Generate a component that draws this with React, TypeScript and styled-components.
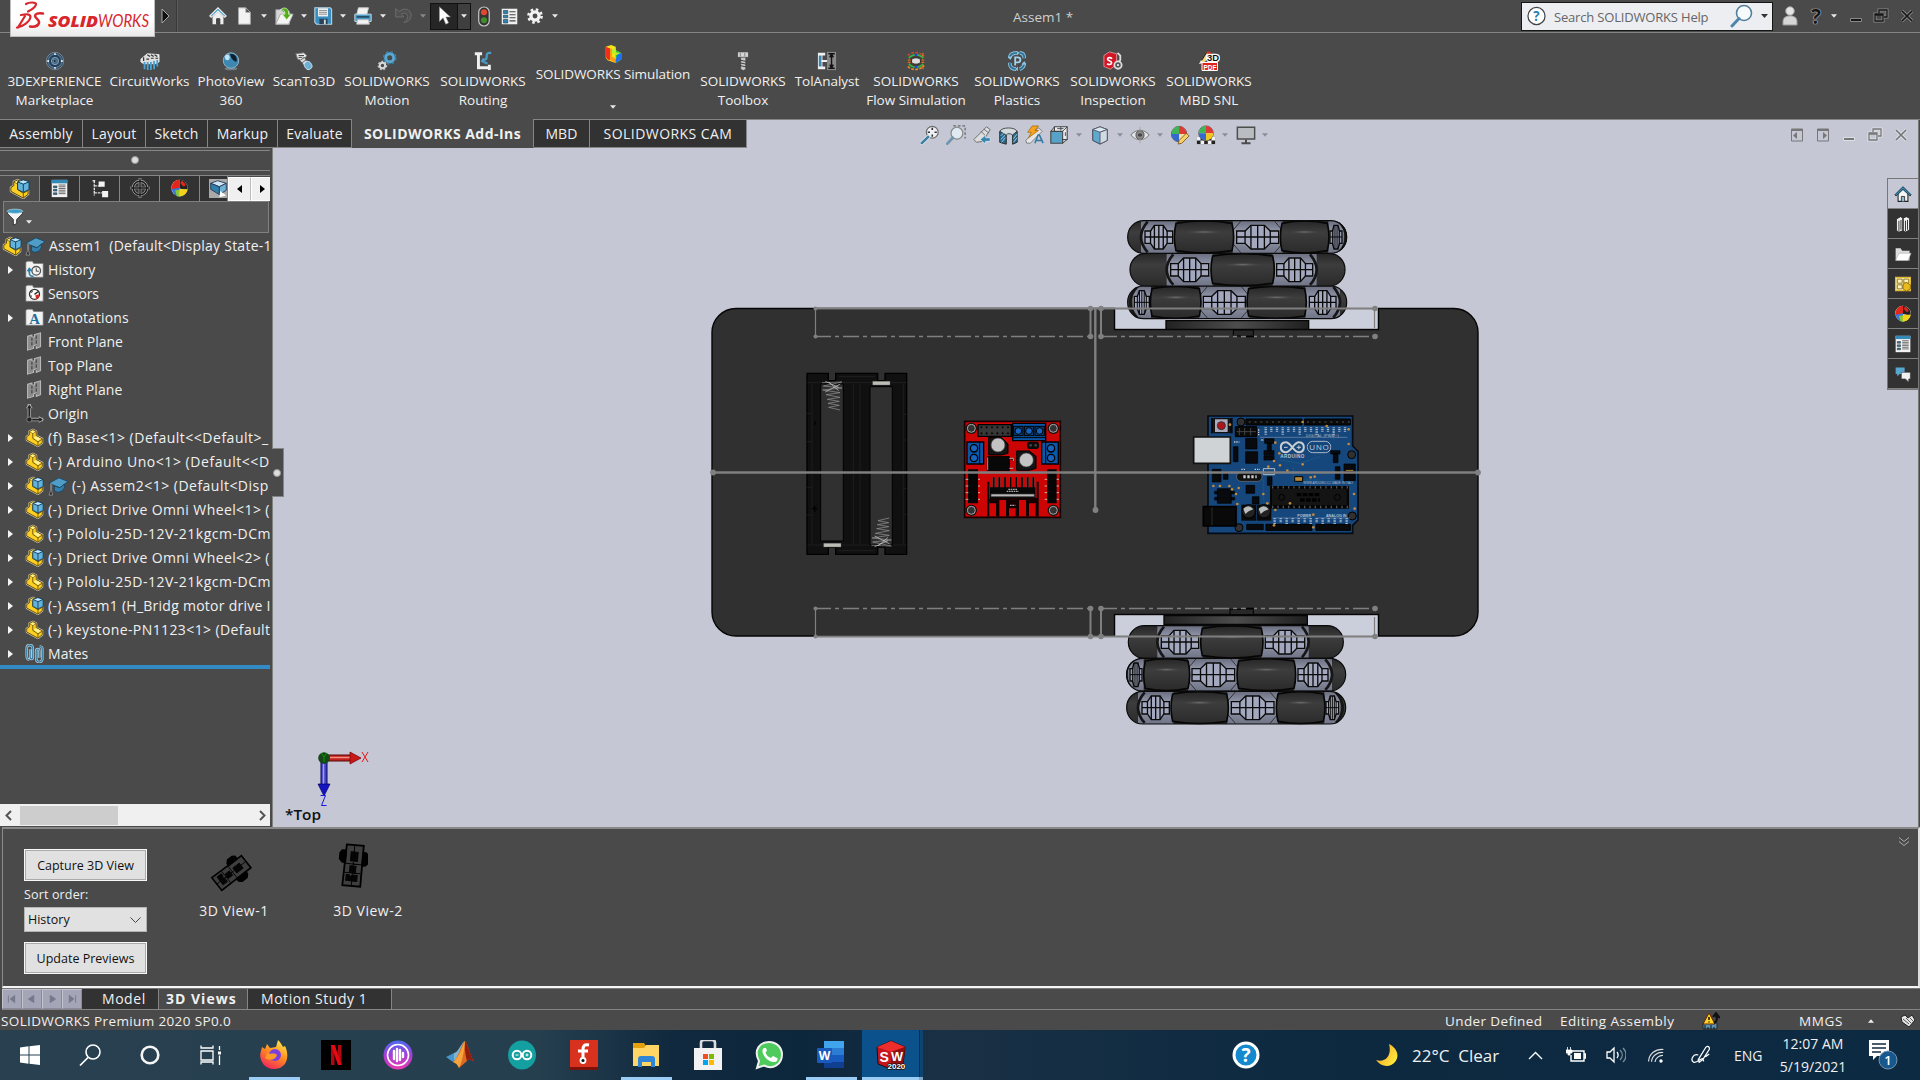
import React from 'react';
import styled, { createGlobalStyle, css } from 'styled-components';

const C = {
  dark: '#4a4a4a',
  tab: '#323232',
  line: '#858585',
  view: '#c5c8d4',
  text: '#f0f0f0',
};

const Global = createGlobalStyle`
  *{box-sizing:border-box}
  body{margin:0;background:${C.dark};overflow:hidden;font-family:"Open Sans","Noto Sans",sans-serif;font-size:14px;color:${C.text}}
  svg{display:block;flex:none}
`;

const Page = styled.div`width:1920px;height:1080px;display:flex;flex-direction:column;overflow:hidden;background:${C.dark};`;

/* ---------- shared ---------- */
const Slot = styled.div<{ w: number }>`width:${p => p.w}px;flex:none;display:flex;align-items:center;justify-content:center;`;
const Gap = styled.div<{ w: number }>`width:${p => p.w}px;flex:none;`;
const Grow = styled.div`flex:1;min-width:0;`;
const Caret = ({ c = '#e8e8e8', s = 7 }: { c?: string; s?: number }) => (
  <svg width={s} height={4} viewBox="0 0 7 4"><path d="M0 0h7L3.500 4z" fill={c} /></svg>
);

/* ---------- icons (22 unit grid) ---------- */
const part = <><path d="M2 10 5 8v-4l4-2 4 2v5l7 3.500v4.500l-5 4-13-7z" fill="#ffd43a" stroke="#c9c3ae" strokeWidth="2.400" strokeLinejoin="round" /><path d="M2 10 5 8v-4l4-2 4 2v5l7 3.500v4.500l-5 4-13-7z" fill="#fcd023" stroke="#5a4200" strokeWidth="1" strokeLinejoin="round" /><path d="M5 4l4 2.200 4-2.200M9 6v6l6 4 5-3M15 16v5" stroke="#6b5000" fill="none" strokeWidth="1" /><path d="M6 4.200 9 3l3 1.200L9 6zM10 11l3-1.500 5.500 3-3.500 2.500z" fill="#fff09a" /></>;
const icons: Record<string, React.ReactNode> = {
  home: <><path d="M2 11 11 2l9 9-1.500 1.500L11 5.500l-7.500 7z" fill="#3b9ccb" stroke="#eee" strokeWidth="1.200" /><path d="M5 12l6-6 6 6v8h-4v-6H9.500v6H5z" fill="#eee" /><path d="M9.500 20v-6H13v6" fill="none" stroke="#333" /></>,
  homeDark: <><path d="M5 10v10h12V10l-6-6z" fill="#f6f6f6" stroke="#222" strokeWidth="1.300" /><path d="M1 12 11 2l10 10-1.500 1.500L11 5.500l-8.500 8z" fill="#2f89b8" stroke="#1b3442" strokeWidth="1.100" /><path d="M9 20v-6h4v6" fill="#8fbdd4" stroke="#222" /></>,
  doc: <path d="M5 2h8l5 5v13H5zM13 2v5h5" fill="#f2f2f2" stroke="#aaa" />,
  open: <><path d="M2 4h6l2 2h7v14H2z" fill="#d7d7d7" stroke="#999" /><path d="M2 20 7 9h14l-5 11z" fill="#f4f4f4" stroke="#aaa" /><path d="M7 4c5-4 10-1 9 5h3l-5 6-5-6h3c0-3-1-5-5-5z" fill="#54ad16" stroke="#e8ffe0" strokeWidth=".700" /></>,
  save: <><path d="M2 2h17l1.500 1.500V20H4l-2-2z" fill="#3a8fc0" stroke="#b9d4e2" strokeWidth="1.200" /><path d="M5.500 2.500h11v9h-11z" fill="#f0f0f0" /><path d="M6.500 5h9M6.500 7h9M6.500 9h9" stroke="#888" /><path d="M7 14h9v6H7z" fill="#29445a" /><path d="M12 15h2v5h-2z" fill="#ddd" /></>,
  print: <><path d="M6 2h11l-2 8H4z" fill="#f3f3f3" stroke="#ccc" /><path d="M2 9h18v8H2z" fill="#4c9cc6" stroke="#c9dce6" /><path d="M4 11h14v2H4z" fill="#26506a" /><path d="M5 15h12l1 5H4z" fill="#f3f3f3" stroke="#bbb" /></>,
  undo: <path d="M3 3v9h9L9 9c4-3 8 0 7 4-.5 2-2 4-4 5 5 0 8-4 8-8 0-6-8-9-13-4z" fill="#505050" stroke="#707070" />,
  cursor: <path d="M6 1v16l4-4 3 7 3-1.500-3-6.500h5z" fill="#fff" stroke="#999" strokeWidth=".600" />,
  light: <><rect x="6" y="1" width="11" height="20" rx="5.500" fill="#333" stroke="#ccc" strokeWidth="1.200" /><circle cx="11.500" cy="6.500" r="3.200" fill="#e4472f" /><circle cx="11.500" cy="15" r="3.200" fill="#3f8c2b" /></>,
  list: <><path d="M2 2h18v18H2z" fill="#f0f0f0" /><path d="M4 4h5v3.500H4zM4 9.500h5v3H4zM4 14.500h5v4H4z" fill="#3182ad" stroke="#153b52" strokeWidth=".700" /><path d="M11 5.500h7M11 9h7M11 12.500h7M11 16h7" stroke="#444" strokeWidth="1.300" /></>,
  gear: <><circle cx="11" cy="11" r="5" fill="none" stroke="#f2f2f2" strokeWidth="4" /><circle cx="11" cy="11" r="8" fill="none" stroke="#f2f2f2" strokeWidth="3.200" strokeDasharray="3.100 3.180" /></>,
  user: <><circle cx="11" cy="6" r="4.300" fill="#e5e5e5" stroke="#999" /><path d="M4 20v-4c0-7 14-7 14 0v4z" fill="#d6d6d6" stroke="#999" /></>,
  market: <><circle cx="11" cy="11" r="9.500" fill="#2a4258" stroke="#7e8c98" /><circle cx="11" cy="11" r="7.500" fill="#233e56" stroke="#4e7495" strokeWidth="1.500" /><circle cx="11" cy="11" r="4" fill="#3e6789" stroke="#8ba2b5" /><path d="M9.500 8.800 13 11l-3.500 2.200z" fill="#0f2232" stroke="#9fb4c4" strokeWidth=".500" /><path d="M11 2.500v2M11 17.500v2M2.500 11h2M17.500 11h2" stroke="#d8e0e8" strokeWidth="2" /></>,
  circuit: <><path d="M1 9 8 3l13 1v8l-4 2H4l-3-2z" fill="#ddd" stroke="#fff" strokeWidth=".800" /><path d="M5 12v8M8.500 12v9M12 12v9M15.500 11v9M19 10v7" stroke="#4ba1cf" strokeWidth="2" /><path d="M4 7v4M8 4l3 2M12 4l3 2M16 4l3 2M7 9h3M12 8h3M17 8h3" stroke="#333" strokeWidth="1.300" /></>,
  sphere: <><ellipse cx="11" cy="19.500" rx="7" ry="1.800" fill="#8aa0ac" opacity=".6" /><circle cx="11" cy="10.500" r="8.500" fill="#3c88b2" stroke="#92b8cc" /><path d="M10 3c7 0 8 5 7 9-3-1-6-3-7-9z" fill="#10202b" /><ellipse cx="7" cy="7" rx="2.600" ry="3.200" fill="#bde5f7" /></>,
  scan: <><path d="M2 3l9-1 3 3-3 5-7-1z" fill="#e9e9e9" stroke="#777" /><path d="M5 5h6M5 7h6" stroke="#333" /><path d="M8 8l7 8" stroke="#ddd" strokeWidth="5" /><path d="M7 10l5-3M9 13l5-4" stroke="#555" /><path d="M11 15c2-6 8-4 9 2-2 5-7 5-9-2z" fill="#6eb0d4" stroke="#cfe6f2" /></>,
  motion: <><circle cx="14" cy="7.500" r="4.500" fill="none" stroke="#5aa9d2" strokeWidth="3.400" /><circle cx="14" cy="7.500" r="6.600" fill="none" stroke="#3981aa" strokeWidth="2" strokeDasharray="2.600" /><circle cx="6" cy="16" r="3" fill="none" stroke="#d9d9d9" strokeWidth="2.200" /><circle cx="6" cy="16" r="4.400" fill="none" stroke="#ccc" strokeWidth="1.800" strokeDasharray="1.900" /></>,
  routing: <><path d="M2 3h8M6 3v15.500h12M18 15v6" stroke="#f0f0f0" strokeWidth="3.200" fill="none" /><path d="M20 2h-2c-3 0-3 2-3 5 0 4-3 2-5 4M12 8l-2 3 6 3" stroke="#4a9bc6" strokeWidth="2.400" fill="none" /></>,
  sim: <><path d="M3 3l6-2 5 2v4l6 3v7l-6 4-9-3-2-3z" fill="#f6e21c" /><path d="M3 3l5 2v13l-3-1-2-3z" fill="#f22d1a" /><path d="M8 5l2 .5V14l4 2v4.500L8 18z" fill="#ff9a15" /><path d="M14 7l6 3v7l-6 4z" fill="#1ec53c" /><path d="M16 11l4-1v7l-6 4v-3z" fill="#1f6ff0" /><path d="M10 6l4-1v4l5 1-4 2-5-2z" fill="#b7f02a" /></>,
  bolt: <><path d="M5 1h12v6H5z" fill="#d5d5d5" stroke="#333" strokeWidth=".700" /><path d="M8 2v4M13 2v4" stroke="#777" /><path d="M8.500 7h5.500v13l-2.700 1.500L8.500 20z" fill="#c8c8c8" stroke="#333" strokeWidth=".500" /><path d="M7.500 10l7 1.500M7.500 13l7 1.500M7.500 16l7 1.500" stroke="#333" /></>,
  tol: <><path d="M1 2h8v3H6v12h3v3H1z" fill="#f0f0f0" /><path d="M2 5h3v12H2z" fill="#3586b2" /><path d="M5 11h6" stroke="#fff" strokeWidth="2" /><path d="M11 1h10v20H11z" fill="#8a8a8a" /><path d="M12.500 3h7M12.500 19h7M16 3v16M14 7l2-3.500L18 7M14 15l2 3.500 2-3.500" stroke="#111" strokeWidth="1.500" fill="none" /></>,
  flow: <><path d="M3 7c5-5 12-5 16 0l1 8c-5 5-14 5-18 0z" fill="#4c3d30" /><ellipse cx="11" cy="11" rx="5" ry="3.500" fill="#ddd" stroke="#222" /><path d="M2 5c5-5 14-4 18 1" stroke="#c74a2a" strokeWidth="1.800" fill="none" strokeDasharray="3 1.500" /><path d="M3 8c4-5 12-5 16 0" stroke="#30b848" strokeWidth="1.800" fill="none" /><path d="M2 17c5 5 14 4 18-1" stroke="#e8901b" strokeWidth="1.800" fill="none" strokeDasharray="3 1.500" /><path d="M3 14c4 5 12 5 16 0" stroke="#30b848" strokeWidth="1.800" fill="none" /><circle cx="11" cy="4.500" r="1.600" fill="#2340e0" /><circle cx="11" cy="17.500" r="1.600" fill="#2340e0" /><path d="M2 10h3M17 10h3M2 12.500h3M17 12.500h3M19 2l-1 4M19 20l-1-4" stroke="#e8702a" strokeWidth="1.300" /></>,
  plastic: <><path d="M3 8c0-4 3-6 8-6M14 2c4 0 5 3 5 6M19 13c0 4-2 6-5 7M10 20c-4 0-7-2-7-7" fill="none" stroke="#8cc4e2" strokeWidth="4" /><path d="M3 8c0-4 3-6 8-6M14 2c4 0 5 3 5 6M19 13c0 4-2 6-5 7M10 20c-4 0-7-2-7-7" fill="none" stroke="#2f7095" strokeWidth="2" /><path d="M1 6l2.500 4L6 6M11 0l3 2-3 3M21 15l-2-4-3 4M12 22l-3-2 3-3" fill="#8cc4e2" /><path d="M9 16V7h3a2.500 2.500 0 0 1 0 5.500H9" fill="none" stroke="#a3d3ec" strokeWidth="2" /></>,
  inspect: <><path d="M1 5l6-4 8 2v12l-7 5-7-3z" fill="#d31626" stroke="#f3c6c9" strokeWidth=".700" /><path d="M10 8.500C8 6.500 5 7 5 9s4.500 1.500 4.500 4S6 15 4.500 14" stroke="#fff" strokeWidth="1.800" fill="none" /><path d="M16 2l3 3v5l-2 3" stroke="#ddd" strokeWidth="2" fill="none" /><circle cx="16.500" cy="15.500" r="4" fill="#555" stroke="#ddd" strokeWidth="2" /><circle cx="16.500" cy="15.500" r="1.200" fill="#eee" /></>,
  orient: <><circle cx="13.500" cy="8" r="6.500" fill="#eef0f5" stroke="#6c6c6c" strokeWidth="1.300" /><path d="M9 13l-7 7" stroke="#dfe9ef" strokeWidth="4.400" strokeLinecap="round" /><path d="M9 13l-7 7" stroke="#3d7d9f" strokeWidth="2.800" strokeLinecap="round" /><path d="M13.500 3v2.500M13.500 10.500V13M8.500 8H11M16 8h2.500" stroke="#333" strokeWidth="1.800" /></>,
  zoomarea: <><path d="M8 1h13v14" fill="none" stroke="#444" strokeDasharray="3 2" /><circle cx="12" cy="9" r="6.500" fill="#dfe9f2" stroke="#888" strokeWidth="1.300" /><path d="M7.500 14l-6 6.500" stroke="#6f95ac" strokeWidth="3" strokeLinecap="round" /></>,
  prev: <><path d="M2 16 16 2l4 3-8 13-7 1z" fill="#ddd" stroke="#666" /><path d="M10 7l5 5M13 4.500l5 4" stroke="#666" /><path d="M20 14h-5v-3l-6 5 6 5v-3h5z" fill="#3885ad" stroke="#e9f3f8" strokeWidth=".700" /></>,
  section: <><path d="M2 7c2-5 17-5 19 0v12l-5 2V11c-2-2-6-2-7 0v10l-7-2z" fill="#d3dade" stroke="#444" /><path d="M2 7l7 4v10l-7-2zM16 11l5-4v12l-5 2z" fill="#236e96" stroke="#333" /><path d="M3 12l3-3M3 16l5-5M4 19l4-5M17 15l4-5M17 19l4-5" stroke="#a9d4e8" /></>,
  dynamic: <><path d="M2 17 16 3l4 4L7 20H3z" fill="#e5e5e5" stroke="#777" /><path d="M9 1h7l-4 5h4L5 14l3-6H4z" fill="#f9a51b" stroke="#9a5a00" strokeWidth=".700" /><path d="M12 20l3.500-9h1.500l4 9M13 17h6" stroke="#2e79a5" strokeWidth="1.700" fill="none" /></>,
  viewcube: <><path d="M6 2h14v14H6z" fill="#e9edf2" stroke="#444" strokeWidth="1.200" /><path d="M2 7h13v13H2z" fill="#57a2c9" stroke="#444" strokeWidth="1.200" /><path d="M2 7l4-5M15 7l5-5M15 20l5-4M13 2v4M9 4h7M18 8v4" stroke="#444" /></>,
  display: <><path d="M3 5l8-3 8 3v12l-8 4-8-4z" fill="#5ea9cd" stroke="#445" strokeWidth="1.100" /><path d="M3 5l8 3 8-3-8-3z" fill="#d7e9f2" stroke="#556" /><path d="M11 8v13l8-4V5z" fill="#cfdbe2" stroke="#556" /></>,
  eye: <><path d="M1 11c6-7 14-7 20 0-6 7-14 7-20 0z" fill="#e6e8ee" stroke="#888" strokeWidth="1.200" /><circle cx="11" cy="11" r="4.500" fill="#888" stroke="#555" /><circle cx="11" cy="11" r="2" fill="#222" /><path d="M11 2v18" stroke="#999" strokeWidth=".700" /></>,
  ball: <><circle cx="10" cy="10" r="8.500" fill="#eee" stroke="#555" /><path d="M10 10V1.500A8.500 8.500 0 0 0 1.500 10z" fill="#3fb558" /><path d="M10 10V1.500A8.500 8.500 0 0 1 18.500 10z" fill="#e03a34" /><path d="M10 10h8.500A8.500 8.500 0 0 1 10 18.500z" fill="#f1e0a0" /><path d="M10 10v8.500A8.500 8.500 0 0 1 1.500 10z" fill="#3569cf" /><path d="M9 21l1-4 8-8 3 3-8 8z" fill="#f7d26a" stroke="#7a4d11" strokeWidth=".900" /></>,
  scene: <><path d="M1 13h20v8H1z" fill="#222" /><path d="M1 13h4v4H1zM9 13h4v4H9zM17 13h4v4h-4zM5 17h4v4H5zM13 17h4v4h-4z" fill="#f2f2f2" /><circle cx="11" cy="9" r="8" fill="#eee" stroke="#555" /><path d="M11 9V1a8 8 0 0 0-8 8z" fill="#3fb558" /><path d="M11 9V1a8 8 0 0 1 8 8z" fill="#e03a34" /><path d="M11 9h8a8 8 0 0 1-8 8z" fill="#f0c61f" /><path d="M11 9v8a8 8 0 0 1-8-8z" fill="#3569cf" /></>,
  monitor: <><path d="M1.500 2.500h19v13h-19z" fill="#b9bdc2" stroke="#4d4d4d" strokeWidth="1.600" /><path d="M11 16v3M6 20h10" stroke="#4d4d4d" strokeWidth="2.200" /></>,
  part,
  asm: <>{part}<path d="M9 4l6-2 6 2v8l-6 3-6-3z" fill="#64b3dc" stroke="#143d56" /><path d="M9 4l6 2.500L21 4M15 6.500V15" stroke="#143d56" fill="none" /><path d="M10.500 4l4.500-1.300L19.500 4 15 5.600z" fill="#c5e8f8" /></>,
  hat: <><path d="M1 8l11-6 10 4-9 7z" fill="#4f9cc7" stroke="#1a4560" /><path d="M7 11v5c4 4 9 1 11-3V9l-5 4z" fill="#3581ac" stroke="#1a4560" /><path d="M3 8v8l-2 5h4l-1-5V9" fill="#222" stroke="#a5a5a5" strokeWidth=".800" /></>,
  folder: <path d="M1 20V3l1.500-1.500h6L10 4h11v16z" fill="#f2f2f2" stroke="#777" strokeWidth=".800" />,
  plane: <><path d="M3 5l5-1.500v3l3-1V3l7-2v16l-5 2v-4l-3 1v3l-7 2z" fill="#8c8c8c" stroke="#bababa" strokeWidth="1.200" /><path d="M8 6v10M13 4v12" stroke="#3a3a3a" strokeWidth="1.200" strokeDasharray="4 1.500" /></>,
  origin: <><path d="M5 0v18h16" stroke="#aaa" strokeWidth="4" fill="none" /><path d="M5-1l4 6H1zM22 18l-6-4v8z" fill="#aaa" /><path d="M5 3v15h14" stroke="#222" strokeWidth="2" fill="none" /><path d="M5 1l2.500 4h-5zM20.500 18l-4-2.500v5z" fill="#222" /><circle cx="5" cy="18" r="3" fill="#222" stroke="#999" strokeWidth=".800" /></>,
  mates: <><path d="M5 18c-3 0-3-2-3-5V5c0-5 7-5 7 0v10c0 3-3 3-3 0V6" fill="none" stroke="#b4c9d4" strokeWidth="3" /><path d="M17 3c4 0 3 3 3 6v8c0 5-7 5-7 0V8c0-3 3.500-3 3.500 0v8" fill="none" stroke="#b4c9d4" strokeWidth="3" /><path d="M5 18c-3 0-3-2-3-5V5c0-5 7-5 7 0v10c0 3-3 3-3 0V6M17 3c4 0 3 3 3 6v8c0 5-7 5-7 0V8c0-3 3.500-3 3.500 0v8" fill="none" stroke="#2c7aa5" strokeWidth="1.300" /></>,
  prop: <><path d="M2 1h18v20H2z" fill="#f2f2f2" /><path d="M2 1h18v4H2z" fill="#3589b6" /><path d="M4 8h4v2H4zM4 12h4v2H4zM4 16h4v2H4z" fill="#2d7ba5" stroke="#222" strokeWidth=".600" /><path d="M10 9h8M10 13h8M10 17h8M10 7h8M10 11h8M10 15h8" stroke="#444" strokeWidth=".900" /></>,
  config: <><path d="M3 2h4M5 2v17M5 8h7M5 16h9" stroke="#ddd" strokeWidth="1.600" fill="none" strokeDasharray="3 1" /><path d="M10 3h7v6h-7zM14 14h7v7h-7z" fill="#f3f3f3" /></>,
  target: <><circle cx="11" cy="11" r="7.500" fill="none" stroke="#a8a8a8" strokeWidth="3.200" /><path d="M11 0v22M0 11h22" stroke="#a8a8a8" strokeWidth="3" /><circle cx="11" cy="11" r="7.500" fill="none" stroke="#1d1d1d" strokeWidth="1.700" /><path d="M11 .5v21M.5 11h21" stroke="#1d1d1d" strokeWidth="1.500" /></>,
  appear: <><circle cx="11" cy="10.500" r="9.500" fill="#eee" /><path d="M11 11V1A9.500 9.500 0 0 0 2 13z" fill="#e3261c" /><path d="M11 11V1a9.500 9.500 0 0 1 9 12z" fill="#222" /><path d="M2 12l9-2 2 10A9.500 9.500 0 0 1 2 12z" fill="#3777d8" /><path d="M6 13l14-1a9.500 9.500 0 0 1-12 8z" fill="#8ac82b" /><path d="M11 12l9.500 0a9.500 9.500 0 0 1-10 8z" fill="#f5d11c" /><ellipse cx="15" cy="5.500" rx="2" ry="3.500" fill="#e3261c" transform="rotate(-40 15 5.500)" /></>,
  cam: <><path d="M0 0h22v22H0z" fill="#a9a9a9" /><path d="M2 5l8-3 10 3-8 4z" fill="#cfe6f2" stroke="#235" /><path d="M2 5l10 4v9L2 12z" fill="#2f7fa8" stroke="#235" /><path d="M12 9l8-4v8l-8 5z" fill="#6fb4d6" stroke="#235" /><path d="M13 14l7 5-8 2z" fill="#fff" /></>,
  filter: <><path d="M2 5v2l7 7v7l4-2v-5l7-7V5z" fill="#f4f4f4" stroke="#222" /><ellipse cx="11" cy="4" rx="9.500" ry="2.600" fill="#3c9bc8" stroke="#bfe0ee" strokeWidth=".800" /></>,
  library: <><path d="M3 5l5-3 3 2v15l-5 2-3-2zM11 4l4-2 4 2v14l-5 3-3-2z" fill="#f2f2f2" stroke="#222" strokeWidth="1" /><path d="M6 7v13M14 7v13M8.500 6v12M16.500 6v12M11 4v15" stroke="#333" strokeWidth="1.200" /></>,
  folder2: <><path d="M2 4h6l2 3h9v12H2z" fill="#ddd" /><path d="M2 19l4-9h15l-4 9z" fill="#fff" stroke="#999" strokeWidth=".600" /></>,
  palette: <><path d="M2 3h18v16H2z" fill="#fff3bd" stroke="#e1b934" strokeWidth="1.600" /><path d="M4 5h6v5H4zM12 5h6v5h-6zM4 12h6v5H4z" fill="none" stroke="#8d7422" strokeWidth="1.200" /><path d="M11 11l4-2 5 3v5l-5 3-4-3z" fill="#e9b91e" stroke="#6b5000" strokeWidth=".800" /></>,
  forum: <><path d="M2 3h11v8H7l-3 3v-3H2z" fill="#57a6cd" /><path d="M9 9h11v8h-2v4l-4-4H9z" fill="#f1f1f1" stroke="#333" strokeWidth=".700" /></>,
};
const Icon = ({ n, s = 20 }: { n: string; s?: number }) => <svg width={s} height={s} viewBox="0 0 22 22">{icons[n]}</svg>;

/* ---------- title bar ---------- */
const TitleBar = styled.header`height:33px;flex:none;display:flex;align-items:center;border-bottom:1px solid ${C.line};position:relative;z-index:2;`;
const LogoBox = styled.div`width:145px;height:37px;margin:0 0 0 10px;align-self:flex-start;flex:none;background:linear-gradient(#fff 55%,#e9e9e9);border:1px solid #bdbdbd;border-top:0;`;
const Divider = styled.div`width:2px;height:32px;background:#3a3a3a;border-right:1px solid #5a5a5a;flex:none;`;
const SelectTool = styled.div`width:41px;height:27px;flex:none;display:grid;grid-template-columns:26px 1fr;background:#262626;border:1px solid #111;align-items:center;justify-items:center;> :last-child{border-left:1px solid #111;}`;
const CaretCell = styled.div`height:100%;width:100%;background:#3f3f3f;display:flex;align-items:center;justify-content:center;`;
const DocTitle = styled.div`width:73px;flex:none;font-size:13.500px;color:#cfcfcf;white-space:pre;padding-top:2px;`;
const Search = styled.div`width:252px;height:29px;flex:none;background:#eceef2;border:1px solid #151515;display:flex;align-items:center;color:#666;font-size:13px;padding-left:5px;`;
const SearchText = styled.div`width:179px;padding-left:8px;white-space:nowrap;letter-spacing:-.18px;padding-top:2px;`;
const HelpMark = styled.span`font:700 21px "Open Sans",sans-serif;color:#161616;text-shadow:0 0 1px #ccc,0 0 1px #ccc,0 0 1px #ccc;line-height:20px;`;

const Logo = () => (
  <svg width="143" height="36" viewBox="0 0 143 36">
    <g fill="none" stroke="#d8262c" strokeLinecap="round" strokeLinejoin="round">
      <path d="M15 4c3-2 10-2 10 0 0 2.500-4 5.500-8 7.500" strokeWidth="2.200" />
      <path d="M6 27.500c6-1 13-6 13.500-10.500 0-3.500-5-3-9.500-2M14 16 7 27.500" strokeWidth="2.200" />
      <path d="M32 13.500c-5-1-8 .5-8 2.500s5 4 4 7-5 4-9 3.500" strokeWidth="2.500" />
    </g>
    <text x="37" y="26.500" fontFamily="Open Sans" fontStyle="italic" fontWeight="800" fontSize="16.500" fill="#d8262c" textLength="50" lengthAdjust="spacingAndGlyphs">SOLID</text>
    <text x="87" y="26.500" fontFamily="Lato" fontStyle="italic" fontWeight="400" fontSize="17" fill="#d8262c" textLength="51" lengthAdjust="spacingAndGlyphs">WORKS</text>
  </svg>
);

const WinIcon = ({ k, c = '#161616', h = '#8a8a8a' }: { k: 'min' | 'restore' | 'close' | 'left' | 'right'; c?: string; h?: string }) => (
  <svg width="16" height="16" viewBox="0 0 16 16">
    {k === 'min' && <path d="M2.500 10.500h11v3h-11z" fill={c} stroke={h} />}
    {k === 'restore' && <g fill="none"><path d="M6 4V2h8v7h-3M2 6h8v7H2z" stroke={h} strokeWidth="3" /><path d="M6 5V2h8v7h-3M2 6h8v7H2z M2 7h8" stroke={c} strokeWidth="1.300" /></g>}
    {k === 'close' && <g><path d="M3 3l10 10M13 3 3 13" stroke={h} strokeWidth="3.200" /><path d="M3 3l10 10M13 3 3 13" stroke={c} strokeWidth="1.700" /></g>}
    {(k === 'left' || k === 'right') && <g><path d="M2.500 2h11v12h-11z" fill="none" stroke={c} /><path d="M2 3h12" stroke={c} strokeWidth="2" /><path d={k === 'left' ? 'M8 5v7L4 8.500zM10 3v11' : 'M8 5v7l4-3.500zM6 3v11'} fill={c} /></g>}
  </svg>
);

/* ---------- ribbon ---------- */
const Ribbon = styled.nav`height:86px;flex:none;display:flex;padding-left:4px;`;
const Cmd = styled.div<{ w: number; up?: boolean }>`width:${p => p.w}px;flex:none;display:flex;flex-direction:column;align-items:center;text-align:center;padding-top:${p => (p.up ? 11 : 18)}px;font-size:13.500px;line-height:19px;white-space:pre;letter-spacing:${p => (p.up ? -.08 : 0)}px;svg + span{padding-top:${p => (p.up ? 1 : 0.5)}px;}span + svg{margin-top:21px;}`;
const cmds: [string, string, number][] = [
  ['market', '3DEXPERIENCE\nMarketplace', 101], ['circuit', 'CircuitWorks', 89], ['sphere', 'PhotoView\n360', 74], ['scan', 'ScanTo3D', 72],
  ['motion', 'SOLIDWORKS\nMotion', 94], ['routing', 'SOLIDWORKS\nRouting', 98], ['sim', 'SOLIDWORKS Simulation', 162], ['bolt', 'SOLIDWORKS\nToolbox', 98],
  ['tol', 'TolAnalyst', 70], ['flow', 'SOLIDWORKS\nFlow Simulation', 108], ['plastic', 'SOLIDWORKS\nPlastics', 94], ['inspect', 'SOLIDWORKS\nInspection', 98], ['pdf', 'SOLIDWORKS\nMBD SNL', 94],
];
const PdfIcon = () => (
  <svg width="22" height="20" viewBox="0 0 22 20">
    <path d="M2 12 9 1l4 2-6 9z" fill="#f3d36b" stroke="#222" /><path d="M1 13l2-4 3 3z" fill="#eee" /><path d="M8 2l2-2 4 2-1 2z" fill="#c83a2a" />
    <text x="9" y="10" fontFamily="Liberation Sans" fontWeight="700" fontSize="9.500" fill="#111" stroke="#fff" strokeWidth="2.500" paintOrder="stroke">3D</text>
    <path d="M4 11.500h15.500v8H4z" fill="#e2231a" stroke="#fff" /><text x="5.500" y="18.500" fontFamily="Liberation Sans" fontWeight="700" fontSize="6.500" fill="#fff">PDF</text>
  </svg>
);

/* ---------- tab strip ---------- */
const TabStrip = styled.div`height:29px;flex:none;display:flex;border-top:1px solid ${C.line};`;
const Tab = styled.div<{ w: number; on?: boolean; sp?: number }>`width:${p => p.w}px;flex:none;display:flex;align-items:center;justify-content:center;white-space:nowrap;font-size:14px;letter-spacing:${p => p.sp ?? .15}px;border-right:1px solid ${C.line};border-bottom:1px solid ${C.line};background:${C.tab};
  ${p => p.on && css`background:${C.dark};font-weight:700;border-bottom-color:${C.dark};margin-top:-1px;letter-spacing:.45px;`}`;
const HeadsUp = styled.div`flex:1;background:${C.view};display:flex;align-items:center;padding:2px 0 0 170px;border-right:1px solid #777;margin-right:1px;`;

/* ---------- middle ---------- */
const Middle = styled.div`height:679px;flex:none;display:flex;`;
const Side = styled.aside`width:270px;flex:none;display:flex;flex-direction:column;overflow:hidden;`;
const Splitter = styled.div`width:3px;flex:none;border-right:1px solid #808080;position:relative;`;
const Handle = styled.div`position:absolute;left:2px;top:300px;width:12px;height:49px;z-index:3;background:${C.dark};border:1px solid ${C.line};border-left:0;display:flex;align-items:center;justify-content:center;padding-right:1px;`;
const Dot = styled.i`width:8px;height:8px;border-radius:50%;background:#ddd;border:1.500px solid #999;flex:none;`;
const Header = styled.div`margin-top:2px;height:21px;border:solid ${C.line};border-width:1px 0;display:flex;align-items:center;justify-content:center;flex:none;padding-bottom:2px;`;
const SideTabs = styled.div`margin-top:4px;height:26px;flex:none;display:flex;border-top:1px solid ${C.line};`;
const SideTab = styled.div<{ on?: boolean; w?: number }>`width:${p => p.w ?? 40}px;flex:none;background:${p => (p.on ? C.dark : C.tab)};border-right:1px solid ${C.line};display:flex;align-items:center;justify-content:center;overflow:hidden;padding-bottom:1px;`;
const Scroller = styled.div<{ w: number }>`width:${p => p.w}px;flex:none;background:#f0f0f0;border:1px solid #fff;border-right-color:#bbb;margin-top:1px;display:flex;align-items:center;justify-content:center;`;
const Filter = styled.div`margin:0 1px 0 3px;height:32px;background:#575757;border:1px solid #808080;display:flex;align-items:center;gap:2px;padding-left:2px;flex:none;svg + svg{margin-top:9px;}`;
const Tree = styled.div`flex:1;overflow:hidden;padding-top:.5px;`;
const Row = styled.div`height:24px;display:flex;align-items:center;white-space:pre;font-size:14px;`;
const Twisty = styled.div`width:25px;padding-left:8px;flex:none;`;
const Label = styled.span<{ sp?: number }>`padding-left:4px;letter-spacing:${p => p.sp ?? 0.1}px;line-height:22px;`;
const Rollback = styled.div`height:4px;background:#338bc6;margin-top:-.5px;`;
const HScroll = styled.div`height:22px;margin-bottom:1px;background:#f0f0f0;flex:none;display:grid;grid-template-columns:20px 98px 1fr 16px;align-items:center;justify-items:center;svg:first-child{margin-right:3px;}`;
const Thumb = styled.div`background:#cdcdcd;width:98px;height:19px;`;

type Node = [string, string, boolean, number?];
const nodes: Node[] = [
  ['history', 'History', true, 0.1], ['sensor', 'Sensors', false, -0.1], ['ann', 'Annotations', true, 0.12], ['plane', 'Front Plane', false, 0.02], ['plane', 'Top Plane', false, 0.02], ['plane', 'Right Plane', false, 0.12], ['origin', 'Origin', false],
  ['part', '(f) Base<1> (Default<<Default>_', true, 0.5], ['part', '(-) Arduino Uno<1> (Default<<D', true, 0.55], ['asmhat', '(-) Assem2<1> (Default<Disp', true, 0.48],
  ['asm', '(-) Driect Drive Omni Wheel<1> (', true, 0.4], ['part', '(-) Pololu-25D-12V-21kgcm-DCm', true, 0.5], ['asm', '(-) Driect Drive Omni Wheel<2> (', true, 0.4], ['part', '(-) Pololu-25D-12V-21kgcm-DCm', true, 0.5],
  ['asm', '(-) Assem1 (H_Bridg motor drive I', true, 0.26], ['part', '(-) keystone-PN1123<1> (Default', true, 0.4], ['mates', 'Mates', true],
];
const FolderIcon = ({ k }: { k: string }) => (
  <svg width="19" height="19" viewBox="0 0 22 22">{icons.folder}
    {k === 'history' && <g fill="none"><circle cx="13" cy="12.500" r="5" stroke="#555" strokeWidth="1.500" /><path d="M13 9.500v3.500h3" stroke="#333" /><path d="M5 10v5c0 2 2 4 5 4M3 13l2-3 3 3" stroke="#2b7fae" strokeWidth="2" /></g>}
    {k === 'sensor' && <g><circle cx="11" cy="12" r="5.800" fill="#fff" stroke="#333" strokeWidth="1.500" /><path d="M11 12l4-3" stroke="#222" strokeWidth="1.500" /><path d="M12 13l4-1v4l-3 2z" fill="#d4271e" /><path d="M7 10l2-2M7 13v2" stroke="#555" strokeWidth="1.500" /></g>}
    {k === 'ann' && <text x="11" y="19" textAnchor="middle" fontFamily="Liberation Serif" fontWeight="700" fontSize="17" fill="#1e6e9e">A</text>}
  </svg>
);
const NodeIcon = ({ k }: { k: string }) => ['history', 'sensor', 'ann'].includes(k) ? <FolderIcon k={k} /> : k === 'asmhat' ? <><Icon n="asm" s={19} /><Gap w={4} /><Icon n="hat" s={20} /></> : <Icon n={k} s={19} />;

/* ---------- model ---------- */
const Viewport = styled.main`flex:1;background:${C.view};position:relative;border-right:1px solid #777;margin-right:1px;`;
const TaskPane = styled.div`position:absolute;right:0;top:30px;width:31px;display:flex;flex-direction:column;border:1px solid #777;border-right:0;background:#333;`;
const PaneBtn = styled.div<{ on?: boolean }>`height:30px;display:flex;align-items:center;justify-content:center;background:${p => (p.on ? '#c5c8d4' : C.tab)};border-bottom:1px solid #808080;`;

/* one ring of an omni wheel: dark barrels with lavender frames between */
type Ring = { id: string; y: number; l: number; r: number; hubs: [number, number][]; barrels: [number, number][] };
const WheelRing = ({ id, y, l, r, hubs, barrels }: Ring) => (
  <g>
    <clipPath id={id}><rect x={l - 2} y={y - 2} width={r - l + 4} height="102" rx="50" /></clipPath>
    <g clipPath={`url(#${id})`}>
      <rect x={l} y={y} width={r - l} height="98" rx="48" fill="url(#barrel)" />
      {hubs.map(([a, b], i) => {
        const w = b - a, q = w / 5, big = w > 70, f = big ? 12 : 5;
        const mid = (a + b) / 2, left = mid < 400;
        const side = Math.abs(mid - 440) > 90;
        return (
          <g key={i}>
            <path d={`M${a - f} ${y}h${w + f * 2}v98h-${w + f * 2}z`} fill="url(#frame)" />
            {!side && <path d={`M${a - f} ${y + 30}l24-28M${b + f} ${y + 30}l-24-28M${a - f} ${y + 68}l24 28M${b + f} ${y + 68}l-24 28`} stroke="#333" strokeWidth="3" />}
            <path d={`M${a} ${y + 31}h${q}l${q * 0.7}-17h${q * 1.6}l${q * 0.7} 17h${q}v37h-${q}l-${q * 0.7} 17h-${q * 1.6}l-${q * 0.7}-17h-${q}z`} fill="#a3a8bf" stroke="#0a0a0a" strokeWidth="4" />
            <path d={`M${a} ${y + 49}h${w}M${a + q} ${y + 30}v38M${a + q * 1.7} ${y + 14}v70M${a + q * 2.5} ${y + 14}v70M${a + q * 3.3} ${y + 14}v70M${a + q * 4} ${y + 30}v38`} stroke="#0a0a0a" strokeWidth={big ? 4 : 3} />
            {side && <path d={left ? `M${a + 8} ${y + 3}q-40 46 0 92` : `M${b - 8} ${y + 3}q40 46 0 92`} fill="none" stroke="#161616" strokeWidth="8" />}
          </g>
        );
      })}
      {barrels.map(([a, b], i) => (
        <g key={i}>
          <path d={`M${a + 4} ${y + 8}Q${(a + b) / 2} ${y - 6} ${b - 4} ${y + 8}Q${b + 6} ${y + 49} ${b - 4} ${y + 90}Q${(a + b) / 2} ${y + 104} ${a + 4} ${y + 90}Q${a - 6} ${y + 49} ${a + 4} ${y + 8}z`} fill="url(#barrel)" stroke="#060606" strokeWidth="5" />
          <ellipse cx={(a + b) / 2} cy={y + 34} rx={(b - a) / 3.2} ry="6" fill="url(#shine)" />
        </g>
      ))}
    </g>
    <rect x={l} y={y} width={r - l} height="98" rx="48" fill="none" stroke="#0a0a0a" strokeWidth="3.500" />
  </g>
);
const Spring = ({ x, y, up }: { x: number; y: number; up?: boolean }) => (
  <g transform={`translate(${x} ${y})${up ? ' scale(1 -1)' : ''}`} fill="none" stroke="#999" strokeWidth="2">
    <path d="M0 4 60 2 4 14l56 6L2 26l52 8-42 6 42 8-38 6 36 6-34 6 34 6-32 6 34 8" /><path d="M10 0 50 18M55 8 10 32M20 2l30 26" stroke="#d0d0d0" />
  </g>
);
const range = (n: number) => Array.from({ length: n }, (_, i) => i);

const Model = () => (
  <svg width="1645" height="679" viewBox="273 148 1645 679">
    <defs>
      <linearGradient id="barrel" x1="0" y1="0" x2="0" y2="1"><stop offset="0" stopColor="#262626" /><stop offset=".35" stopColor="#3d3d3d" /><stop offset="1" stopColor="#2a2a2a" /></linearGradient>
      <linearGradient id="frame" x1="0" y1="0" x2="0" y2="1"><stop offset="0" stopColor="#696d7e" /><stop offset=".4" stopColor="#9a9fb4" /><stop offset="1" stopColor="#6f7385" /></linearGradient>
      <radialGradient id="shine"><stop offset="0" stopColor="#707070" /><stop offset="1" stopColor="#444" stopOpacity="0" /></radialGradient>
      <linearGradient id="disc"><stop offset="0" stopColor="#222" /><stop offset=".5" stopColor="#4d4d4d" /><stop offset="1" stopColor="#1f1f1f" /></linearGradient>
    </defs>
    <path d="M736 308.500H1114.500V329.500H1378.500V308.500H1454a24 24 0 0 1 24 24V612a24 24 0 0 1-24 24H1378.500V614.500H1114.500V636H736a24 24 0 0 1-24-24V332.500a24 24 0 0 1 24-24z" fill="#303030" stroke="#050505" strokeWidth="1.400" />
    <path d="M1116 310h261v18.500h-261zM1116 615.500h261v20h-261z" fill="#d3d8e4" opacity=".45" />
    <g transform="translate(1090 200) scale(.33333)">
      <path d="M228 362h428v26H228z" fill="url(#disc)" stroke="#060606" strokeWidth="4" /><path d="M430 390h60v18h-60z" fill="#282828" stroke="#000" strokeWidth="3" />
      <WheelRing id="t3" y={258} l={113} r={770} hubs={[[133, 178], [340, 466], [658, 738]]} barrels={[[182, 332], [472, 648]]} />
      <WheelRing id="t2" y={160} l={120} r={765} hubs={[[242, 356], [560, 668]]} barrels={[[364, 552]]} />
      <WheelRing id="t1" y={62} l={113} r={770} hubs={[[165, 248], [440, 566], [720, 756]]} barrels={[[254, 430], [572, 716]]} />
    </g>
    <g transform="translate(1090 590) scale(.33333)">
      <path d="M222 77h430v26H222z" fill="url(#disc)" stroke="#060606" strokeWidth="4" /><path d="M420 58h70v16h-70z" fill="#282828" stroke="#000" strokeWidth="3" />
      <WheelRing id="b1" y={107} l={115} r={760} hubs={[[214, 326], [526, 644]]} barrels={[[333, 518]]} />
      <WheelRing id="b2" y={205} l={110} r={767} hubs={[[120, 156], [306, 434], [624, 714]]} barrels={[[162, 298], [442, 616]]} />
      <WheelRing id="b3" y={304} l={110} r={767} hubs={[[156, 238], [424, 552], [708, 746]]} barrels={[[244, 414], [560, 704]]} />
    </g>

    {/* battery holder */}
    <g transform="translate(790 360) scale(.33333)">
      <path d="M51 40h64v22h22V40h126v22h22V40h65v543h-65v-22h-22v22H137v-22h-22v22H51z" fill="#101010" stroke="#000" strokeWidth="4" />
      <path d="M52 68h298M52 555h298M66 72v480M190 72v480M210 72v480M340 72v480M145 50h110M145 572h110M50 160h16M50 245h16M50 382h16M50 465h16M340 163h10M340 240h10M340 385h10M340 463h10" stroke="#262626" strokeWidth="2" />
      <path d="M92 72h68v471H92zM240 80h67v475h-67z" fill="#303030" stroke="#000" strokeWidth="3" />
      <path d="M248 64h52v11h-52zM101 550h52v11h-52z" fill="#bdbdb8" stroke="#555" /><path d="M74 437v18M66 446h16M75 184v10" stroke="#000" strokeWidth="4" />
      <Spring x={96} y={64} /><Spring x={244} y={560} up />
    </g>

    {/* motor driver */}
    <g transform="translate(790 360) scale(.33333)">
      <path d="M524 184h287v288H524z" fill="#cc0404" stroke="#180000" strokeWidth="5" />
      {[[544, 205], [790, 205], [544, 451], [790, 451]].map(([x, y]) => <g key={`${x}${y}`}><circle cx={x} cy={y} r="17" fill="#111" /><circle cx={x} cy={y} r="12" fill="#333" stroke="#aaa" strokeWidth="3" /></g>)}
      <path d="M564 194h100v35H564z" fill="#383838" stroke="#000" strokeWidth="4" />{range(6).map(i => <path key={i} d={`M${574 + i * 16} 198v8m-4-4h8M${574 + i * 16} 216v8m-4-4h8`} stroke="#000" strokeWidth="2" />)}
      <path d="M668 190h99v52h-99z" fill="#0a57a8" stroke="#000" strokeWidth="4" /><path d="M668 233h99" stroke="#000" strokeWidth="3" />
      {[685, 717, 749].map(x => <g key={x}><rect x={x - 14} y="199" width="28" height="28" fill="#0a3c70" stroke="#000" strokeWidth="3" /><circle cx={x} cy="213" r="10" fill="#1763bd" stroke="#000" strokeWidth="3" /></g>)}
      {[531, 755].map(x => <g key={x}><path d={`M${x} 246h50v66h-50z`} fill="#0a57a8" stroke="#000" strokeWidth="4" /><path d={`M${x + (x > 600 ? 12 : 38)} 246v66`} stroke="#000" strokeWidth="3" />{[265, 294].map(y => <circle key={y} cx={x + (x > 600 ? 28 : 21)} cy={y} r="11" fill="#1763bd" stroke="#000" strokeWidth="4" />)}</g>)}
      <path d="M596 232h38l20 20v28l-20 5h-38zM680 273h38l20 16v36l-20 6h-38z" fill="#141414" stroke="#000" strokeWidth="3" /><circle cx="624" cy="255" r="21" fill="#c4c4c4" stroke="#444" strokeWidth="2" /><circle cx="709" cy="300" r="21" fill="#c4c4c4" stroke="#444" strokeWidth="2" />
      <rect x="711" y="245" width="36" height="22" rx="8" fill="#0b0b0b" /><circle cx="722" cy="256" r="4" fill="#444" /><circle cx="737" cy="256" r="4" fill="#444" />
      <path d="M592 290h66v42h-66z" fill="#080808" stroke="#000" strokeWidth="3" /><path d="M593 292v38" stroke="#999" strokeWidth="3" /><path d="M658 295h12v8M658 325h12" stroke="#aaa" strokeWidth="3" />
      <path d="M534 328h30v102h-30zM771 328h29v102h-29z" fill="#050505" />{range(4).map(i => <path key={i} d={`M527 ${358 + i * 20}h8M564 ${358 + i * 20}h6M764 ${358 + i * 20}h8M800 ${358 + i * 20}h7`} stroke="#bbb" strokeWidth="3" />)}
      {range(8).map(i => <path key={i} d={`M${611 + i * 17} 352v32`} stroke="#444" strokeWidth="7" />)}{range(8).map(i => <path key={i} d={`M${611 + i * 17} 352v32`} stroke="#000" strokeWidth="4" />)}
      <path d="M592 365h6v105h-6zM740 365h6v105h-6zM600 382h136v36h-136z" fill="#080808" /><path d="M598 414h144v56H598z" fill="#150000" /><path d="M603 402h130v8h-130z" fill="#b7b7b7" stroke="#333" strokeWidth="2" /><path d="M650 394h36M655 388h26M660 436h16" stroke="#aaa" strokeWidth="4" strokeDasharray="5 2" />
      <path d="M598 430h20v39h-20zM628 420h20v49h-20zM657 445h20v24h-20zM687 420h21v49h-21zM717 430h20v39h-20z" fill="#d20404" />
    </g>

    {/* microcontroller board */}
    <g transform="translate(1180 400) scale(.33333)">
      <path d="M84 48h434v90l16 16v206l-16 16v24H84z" fill="#15467c" stroke="#050b14" strokeWidth="5" />
      <path d="M190 240h60v60M300 180l60 10 60-20M180 310v60M340 200v40M370 240h50M460 90v30" stroke="#1b5f86" strokeWidth="2" fill="none" />
      <path d="M41 111h110v79H41z" fill="#cfd3d6" stroke="#111" strokeWidth="5" />
      <path d="M93 54h8v46h-8zM148 54h10v46h-10z" fill="#0a0a0a" /><path d="M103 56h42v42h-42z" fill="#aab" stroke="#111" strokeWidth="4" /><circle cx="124" cy="77" r="12" fill="#b1151b" stroke="#333" strokeWidth="3" />
      {[[183, 66], [515, 164], [517, 348], [177, 383]].map(([x, y]) => <circle key={x} cx={x} cy={y} r="12" fill="#303030" stroke="#000" strokeWidth="3" />)}
      <path d="M198 57h168v18H198zM374 57h137v18H374zM258 373h138v18H258zM408 373h103v18H408zM166 80h64v30h-64z" fill="#0a0a0a" stroke="#000" strokeWidth="3" />
      <path d="M178 84v22M194 84v22M212 84v22M170 95h58" stroke="#444" strokeWidth="3" />
      {range(18).map(i => <g key={i}><path d={`M${206 + i * 17.500} 66h6`} stroke="#2f2f2f" strokeWidth="6" />{i > 2 && <path d={`M${206 + i * 17} 82v${i % 3 === 0 ? 22 : 14}`} stroke="#a4b7cd" strokeWidth="7" strokeDasharray="3 2" />}</g>)}
      {range(13).map(i => <path key={i} d={`M${284 + i * 18} 354v${i % 2 ? 14 : 18}`} stroke="#a4b7cd" strokeWidth="7" strokeDasharray="3 2" />)}
      <path d="M240 112h262M277 354h115M410 354h100" stroke="#7790ad" strokeWidth="2" />
      <g fill="none" stroke="#c9ced1" strokeWidth="6"><path d="M337 142c-8-10-14-16-21-15-18 2-18 28 0 30 7 1 13-5 21-15s14-16 21-15c18 2 18 28 0 30-7 1-13-5-21-15z" /></g><path d="M312 142h11M350 142h13M356.500 136v12" stroke="#c9ced1" strokeWidth="3" />
      <rect x="382" y="124" width="70" height="34" rx="16" fill="none" stroke="#aab8c6" strokeWidth="3" />
      <g fill="#b9c4cf" fontFamily="Liberation Sans"><text x="388" y="150" fontSize="24" textLength="58">UNO</text><text x="301" y="175" fontSize="14" fontWeight="700" textLength="72">ARDUINO</text><text x="378" y="110" fontSize="11" textLength="98">DIGITAL (PWM~)</text><text x="352" y="350" fontSize="11" fontWeight="700">POWER</text><text x="438" y="350" fontSize="11" fontWeight="700">ANALOG IN</text><text x="370" y="252" fontSize="9" textLength="150">WWW.ARDUINO.CC MADE IN ITALY</text></g>
      <path d="M270 258h237v68H270z" fill="#060606" /><path d="M276 267h224v48H276z" fill="#141414" /><path d="M276 262h228M276 321h228" stroke="#555" strokeWidth="7" strokeDasharray="4 12" /><circle cx="305" cy="292" r="9" fill="none" stroke="#000" strokeWidth="3" /><circle cx="472" cy="292" r="9" fill="none" stroke="#000" strokeWidth="3" /><path d="M350 284h70M360 300h60" stroke="#000" strokeWidth="10" strokeDasharray="14 4" />
      <path d="M70 320h98v58H70z" fill="#090909" stroke="#000" strokeWidth="5" /><path d="M96 322v54" stroke="#2c2c2c" strokeWidth="3" />
      <path d="M197 115h34v32h-34zM197 155h36v35h-36zM254 116h28v14h-28zM262 130h12v22h-12zM252 152h30v14h-30zM252 168h30v12h-30zM160 140h14v45h-14zM452 152h28v10h-28zM460 162h14v26h-14zM492 192h34v50h-34zM466 200h14v38h-14zM97 208h26v38H97zM130 216h14v22h-14zM262 230h14v26h-14zM112 266h42v44h-42zM104 274h10v8h-10zM104 292h10v8h-10zM154 274h10v8h-10zM154 292h10v8h-10zM198 256h26v24h-26zM217 290h20v22h-20zM200 373h50v16h-50z" fill="#080a0e" stroke="#000" strokeWidth="2" />
      <rect x="170" y="216" width="76" height="28" rx="13" fill="#111" stroke="#777" strokeWidth="2" /><path d="M190 230h40" stroke="#ccc" strokeWidth="9" strokeDasharray="7 5" />
      {[206, 252].map(x => <g key={x}><path d={`M${x - 22} 314h44v48h-44z`} fill="#0a0a0a" /><circle cx={x} cy="334" r="20" fill="#222" stroke="#000" strokeWidth="3" /><path d={`M${x - 16} 326q16-16 30 2l-14 6-10 8z`} fill="#b9bdbd" /></g>)}
      <path d="M250 206h34v18h-34z" fill="none" stroke="#b4bfc9" strokeWidth="3" /><path d="M344 230h24v14h-24zM496 208h26v6h-26z" fill="#b78637" stroke="#000" strokeWidth="3" />
      {[[150, 74], [286, 128], [298, 160], [282, 183], [322, 212], [368, 193], [392, 232], [506, 132], [524, 326], [100, 258], [120, 258], [148, 258], [176, 264], [250, 282], [286, 330], [400, 344], [262, 310], [156, 268], [404, 230], [330, 310], [440, 78], [506, 88], [265, 200], [300, 196], [172, 312], [400, 382], [282, 376], [368, 66], [522, 282], [168, 282]].map(([x, y], i) => <circle key={i} cx={x} cy={y} r="4" fill="#c08a3c" />)}
      <path d="M162 126h16M184 208h14M224 208h16M236 88v20M244 120h8" stroke="#ccc" strokeWidth="4" strokeDasharray="4 3" />
    </g>

    {/* sketch overlay */}
    <g stroke="#7f7f7f" fill="none">
      <path d="M713 472.500h765" strokeWidth="2.600" /><path d="M1095.300 308.500v201" strokeWidth="2.400" />
      <path d="M815 308.500h560M815 636.500h560" strokeWidth="2.200" />
      <path d="M1090.500 308v28M1101 308v28M1090.500 608v28M1101 608v28" strokeWidth="2" /><path d="M815.500 308v28M1374.500 308v20M815.500 608v28M1374.500 617v20" strokeWidth="1.200" />
      <path d="M815 336.500h275M1101 336.500h274M815 608.500h275M1101 608.500h274" strokeDasharray="16 4 4 4" strokeWidth="1.400" />
    </g>
    <g fill="#808080">{[[713, 472.500], [1478, 472.500], [1095.500, 510]].map(([x, y]) => <circle key={x} cx={x} cy={y} r="2.900" />)}
      {[815.500, 1090.500, 1101, 1375].map(x => [308.500, 336.500, 608.500, 636.500].map(y => <circle key={`${x}-${y}`} cx={x} cy={y} r={x < 900 ? 2 : 2.800} />))}</g>
    <path d="M1246 336.500h8M1246 608.500h8" stroke="#000" strokeWidth="2" />

    {/* axis triad */}
    <path d="M328 755h24v6h-24z" fill="#c42020" stroke="#5b0808" /><path d="M330 757.500h20" stroke="#f09080" strokeWidth="1.500" /><path d="M350 752l11 6-11 6z" fill="#c81818" stroke="#700" strokeWidth=".700" />
    <path d="M321 762h6v23h-6z" fill="#4242c8" stroke="#08085a" /><path d="M323.500 764v20" stroke="#9c9cf4" strokeWidth="1.500" /><path d="M318 784h12l-6 12z" fill="#1414c0" stroke="#006" strokeWidth=".700" />
    <circle cx="324" cy="758" r="5.800" fill="#174617" /><path d="M321 753l3 4 3-4M324 757v5" stroke="#0b9a0b" fill="none" />
    <path d="M362 752l6 10M368 752l-6 10" stroke="#ee1515" /><path d="M320.500 795.500h5l-4 10h5" stroke="#1515e8" fill="none" />
    <text x="285" y="820" fontFamily="Open Sans" fontWeight="600" fontSize="15" fill="#111" textLength="36" lengthAdjust="spacingAndGlyphs">*Top</text>
  </svg>
);

/* ---------- 3D views panel ---------- */
const Views = styled.section`height:161px;flex:none;display:flex;margin-left:2px;border:1px solid #8b8b8b;border-top:2px solid #888;border-bottom:2px solid #f4f4f4;border-right:2px solid #ddd;padding:20px 0 0 21px;`;
const Controls = styled.div`width:123px;flex:none;display:flex;flex-direction:column;font-size:12.500px;color:#111;`;
const Btn = styled.div`height:32px;flex:none;background:#e1e1e1;border:1px solid #f8f8f8;outline:1px solid #aaa;outline-offset:-2px;display:flex;align-items:center;justify-content:center;white-space:nowrap;`;
const SortLabel = styled.div`height:26px;line-height:27px;color:${C.text};letter-spacing:.15px;`;
const Drop = styled.div`height:25px;margin-bottom:10px;background:#e1e1e1;border:1px solid #b4b4b4;display:flex;align-items:center;justify-content:space-between;padding:0 5px 0 3px;`;
const View = styled.div<{ ml: number; w: number; up?: boolean }>`margin-left:${p => p.ml}px;width:${p => p.w}px;height:90px;display:flex;flex-direction:column;align-items:center;justify-content:space-between;padding:0 0 12px;margin-top:-6px;svg{margin:${p => (p.up ? '0 30px 0 0' : '11px 7px 0 0')};}span{font-size:14px;letter-spacing:.5px;line-height:20px;white-space:nowrap;}`;
const PanelToggle = styled.div`margin-top:-13px;`;
const RobotThumb = ({ angle, tall }: { angle: number; tall?: boolean }) => (
  <svg width={tall ? 30 : 42} height={tall ? 46 : 38} viewBox={tall ? '-15 -23 30 46' : '-21 -19 42 38'}>
    <g transform={`rotate(${angle})${tall ? '' : ' scale(.9)'}`}><path d="M-8-21H9V20H-9z" fill="#3e3e3e" stroke="#000" strokeWidth="1.800" /><path d="M-14-12l2-3h4v12h-3l-3-3zM9-14h3l3 3v7l-3 3H9z" fill="#000" stroke="#000" strokeWidth="1.500" strokeLinejoin="round" /><path d="M-3-14h7v9h-7zM-3 0h6v6h-6zM-6 9h3l1 2 2-2h5v6H-6zM0-20v40M-8 7H8M-8-2H8" fill="#050505" stroke="#050505" /></g>
  </svg>
);

const BottomTabs = styled.div`height:22px;flex:none;display:flex;margin-left:2px;border-bottom:1px solid ${C.line};border-top:1px solid #777;`;
const NavBtn = styled.div`width:20px;background:#a5a5b8;border:1px solid #8a8a9e;border-left-color:#c3c3d0;border-top-color:#c3c3d0;display:flex;align-items:center;justify-content:center;`;
const BTab = styled.div<{ w: number; pl: number; on?: boolean }>`width:${p => p.w}px;padding-left:${p => p.pl}px;background:${p => (p.on ? C.dark : C.tab)};font-weight:${p => (p.on ? 700 : 400)};border-right:1px solid ${C.line};font-size:14px;line-height:19px;white-space:nowrap;letter-spacing:${p => (p.on ? 1 : .55)}px;`;
const Status = styled.footer`height:20px;flex:none;display:flex;align-items:center;font-size:13.500px;white-space:nowrap;padding:1px 0 0 1px;line-height:20px;`;
const Cell = styled.div<{ w: number; sp?: number }>`width:${p => p.w}px;flex:none;letter-spacing:${p => p.sp ?? 0}px;`;

/* ---------- taskbar ---------- */
const Taskbar = styled.div`height:50px;flex:none;display:flex;align-items:center;background:linear-gradient(90deg,#28404f 0,#263f4f 28%,#10293e 35%,#0c263b 42%,#1a3045 49%,#132d43 58%,#0c2940 70%,#0d2a43 100%);white-space:nowrap;`;
const TaskItem = styled.div<{ w: number; run?: boolean; on?: boolean }>`width:${p => p.w}px;height:50px;flex:none;display:flex;align-items:center;justify-content:center;position:relative;
  ${p => p.run && css`&::after{content:'';position:absolute;left:6px;right:5px;bottom:0;height:3px;background:#9accf5;}`}
  ${p => p.on && css`padding-right:3px;background:linear-gradient(90deg,#0b518b 57px,#082f50 57px,#082f50 58px,#0d4470 58px);&::after{left:0;right:0;background:linear-gradient(90deg,#9accf5 57px,#7fa4c4 57px);}`}`;
const Clock = styled.div`width:70px;text-align:center;font-size:14px;line-height:23px;letter-spacing:0;`;
const Weather = styled.div`width:116px;font-size:17px;white-space:pre;letter-spacing:0;`;
const Lang = styled.div`width:43px;font-size:14px;`;

const T = ({ children, s = 30 }: { children: React.ReactNode; s?: number }) => <svg width={s} height={s} viewBox="0 0 30 30">{children}</svg>;
const taskIcons: { w: number; run?: boolean; on?: boolean; i: React.ReactNode }[] = [
  { w: 60, i: <T><path d="M5 7.500l8.500-1.200v8.200H5zM14.500 6.200 25 5v9.500H14.500zM5 15.500h8.500v8.300L5 22.600zM14.500 15.500H25V25l-10.500-1.300z" fill="#fff" /></T> },
  { w: 60, i: <T><circle cx="18" cy="12" r="7" fill="none" stroke="#fff" strokeWidth="1.600" /><path d="M13 17.500 5 25.500" stroke="#fff" strokeWidth="1.700" /></T> },
  { w: 60, i: <T><circle cx="15" cy="15" r="8.300" fill="none" stroke="#f5f5f5" strokeWidth="2.600" /></T> },
  { w: 63, i: <T><path d="M4 5.500v2.500h12V5.500M4 11h12v9H4zM4 24.500V22h12v2.500M22.500 6v4M22.500 15.500V25" fill="none" stroke="#fff" strokeWidth="1.300" /><path d="M21 11.500h3v3h-3z" fill="#fff" /></T> },
  { w: 62, run: true, i: <T><defs><linearGradient id="fx" x1=".8" y1="0" x2=".3" y2="1"><stop offset="0" stopColor="#ffe94a" /><stop offset=".5" stopColor="#ff8a20" /><stop offset="1" stopColor="#f3255f" /></linearGradient></defs><path d="M3 7l3 2 2-5 3 4 6-1 2-7c3 3 4 5 5 7l2-1c5 10 2 22-10 23C5 30-1 19 2 11z" fill="url(#fx)" /><circle cx="16" cy="15" r="6" fill="#7b3fe0" /><path d="M8 13c4 2 7-1 10 2-1 5-8 6-12 3z" fill="#ff9a28" /></T> },
  { w: 62, i: <T><path d="M0 0h30v30H0z" fill="#000" /><path d="M10 5h3.500v20H10zM17 5h3.500v20H17z" fill="#b00710" /><path d="M10 5h3.700L20.500 25H17z" fill="#e50914" /></T> },
  { w: 62, i: <T><defs><linearGradient id="mo" x2="0" y2="1"><stop stopColor="#4a6df0" /><stop offset=".5" stopColor="#a53dd8" /><stop offset="1" stopColor="#e83cb0" /></linearGradient></defs><circle cx="15" cy="15" r="14.500" fill="url(#mo)" /><circle cx="15" cy="15" r="10.500" fill="none" stroke="#fff" strokeWidth="1.600" /><path d="M11 11v8M14 9v12M17 10v10M20 13v4" stroke="#fff" strokeWidth="2.400" strokeLinecap="round" /></T> },
  { w: 62, i: <T><path d="M1 17l8-4 4 3-5 6z" fill="#4796c9" /><path d="M9 13c4 0 7-10 11-12l-7 17-4 3z" fill="#7fb4d2" /><path d="M8 22c4-2 9-19 12-21 3 3 5 15 9 20-4-1-5-2-7 0l-8 7c-1-3-3-5-6-6z" fill="#dd6a20" /><path d="M20 1c3 3 5 15 9 20-4-1-5-2-7 0-1-4-3-12-2-20z" fill="#8e1d10" /><path d="M14 28c3-6 5-15 6-27-3 5-6 17-12 21 3 1 5 3 6 6z" fill="#f5a33a" /></T> },
  { w: 62, i: <T><ellipse cx="15" cy="15" rx="14" ry="14.500" fill="#149fa0" /><g fill="none" stroke="#fff" strokeWidth="2"><circle cx="10" cy="15" r="4.300" /><circle cx="20" cy="15" r="4.300" /></g><path d="M8.500 15h3M18.500 15h3M20 13.500v3" stroke="#fff" /></T> },
  { w: 62, i: <T><path d="M1 0h28v30H1z" fill="#d8321f" /><path d="M1 27h28v3H1z" fill="#7d1208" /><path d="M20 5c-5-1-6 1-6 5v9M9 11h10" fill="none" stroke="#fff" strokeWidth="3" /><circle cx="14" cy="20.500" r="2.500" fill="#111" stroke="#fff" strokeWidth="1.800" /></T> },
  { w: 62, run: true, i: <T><path d="M2 3h11l2 3h12v5H2z" fill="#e5a00d" /><path d="M2 8h11l2-3h13v21H2z" fill="#ffd566" /><path d="M7 27v-8c0-2 1-3 3-3h11c2 0 3 1 3 3v8h-4v-5h-9v5z" fill="#2f86d6" /></T> },
  { w: 61, i: <T><path d="M8 9V3c0-2 1-3 3-3h8c2 0 3 1 3 3v6" fill="none" stroke="#ddd" strokeWidth="2.600" /><path d="M1 8h28v22H1z" fill="#f2f2f2" /><path d="M10 14h5v5h-5z" fill="#f25022" /><path d="M16 14h5v5h-5z" fill="#7fba00" /><path d="M10 20h5v5h-5z" fill="#00a4ef" /><path d="M16 20h5v5h-5z" fill="#ffb900" /></T> },
  { w: 62, i: <T><path d="M3 28l2-7C-1 10 6 2 15 2c8 0 13 6 13 12.500 0 10-9 15.500-18 11z" fill="#4ecb5c" stroke="#f1f1f1" strokeWidth="2" /><path d="M10 8c-5 3 3 15 11 14 3-1 3-4 2-4l-4-2-2 2c-3-1-5-3-5.500-6l1.500-1-1-3z" fill="#fff" /></T> },
  { w: 62, run: true, i: <T><path d="M8 1h20v7H8z" fill="#41a5ee" /><path d="M8 8h20v7H8z" fill="#2b7cd3" /><path d="M8 15h20v7H8z" fill="#185abd" /><path d="M8 22h20v6H8z" fill="#103f91" /><rect x="1" y="8" width="15" height="15" rx="1" fill="#185abd" /><text x="8.500" y="20" textAnchor="middle" fontFamily="Open Sans" fontWeight="700" fontSize="12" fill="#fff">W</text></T> },
  { w: 61, on: true, run: true, i: <T><path d="M1 7 15 1l14 6-2 18-12 4L2 24z" fill="#c4161c" stroke="#2b0a0a" /><path d="M1 7l14 5 14-5-14-6z" fill="#ee2d2d" /><path d="M15 12 29 7l-2 18-12 4z" fill="#8e1010" /><g fontFamily="Liberation Sans" fontWeight="700" fill="#fff"><text x="3.500" y="22" fontSize="14">S</text><text x="15" y="21" fontSize="13" textLength="12" lengthAdjust="spacingAndGlyphs">W</text><text x="11.500" y="28.500" fontSize="8" stroke="#111" strokeWidth="1.500" paintOrder="stroke">2020</text></g></T> },
];

const huds: [string, number][] = [['orient', 26], ['zoomarea', 26], ['prev', 26], ['section', 26], ['dynamic', 25], ['viewcube', 26], ['^', 14], ['display', 28], ['^', 12], ['eye', 28], ['^', 12], ['ball', 28], ['scene', 24], ['^', 14], ['monitor', 27], ['^', 12]];

export default function App() {
  return (
    <Page>
      <Global />
      <TitleBar>
        <LogoBox><Logo /></LogoBox>
        <Slot w={21}><svg width="9" height="16" viewBox="0 0 9 16"><path d="M1 1v14l7-7z" fill="#111" stroke="#aaa" /></svg></Slot>
        <Divider /><Gap w={27} />
        <Slot w={26}><Icon n="home" /></Slot><Slot w={26}><Icon n="doc" /></Slot><Slot w={13}><Caret s={6} /></Slot>
        <Slot w={28}><Icon n="open" /></Slot><Slot w={11}><Caret s={6} /></Slot><Slot w={28}><Icon n="save" /></Slot><Slot w={12}><Caret s={6} /></Slot>
        <Slot w={28}><Icon n="print" /></Slot><Slot w={12}><Caret s={6} /></Slot><Slot w={28}><Icon n="undo" /></Slot><Slot w={12}><Caret s={6} c="#888" /></Slot><Gap w={1} />
        <SelectTool><Icon n="cursor" /><CaretCell><Caret s={6} /></CaretCell></SelectTool>
        <Slot w={25}><Icon n="light" s={21} /></Slot><Slot w={26}><Icon n="list" s={19} /></Slot><Slot w={26}><Icon n="gear" s={18} /></Slot><Slot w={13}><Caret s={6} /></Slot>
        <Grow />
        <DocTitle>Assem1 *</DocTitle><Gap w={435} />
        <Search>
          <svg width="19" height="20" viewBox="0 0 20 20"><circle cx="10" cy="10" r="9" fill="#fff" stroke="#444" strokeWidth="1.300" /><text x="10" y="15" textAnchor="middle" fontFamily="Open Sans" fontWeight="700" fontSize="14" fill="#2b7fae">?</text></svg>
          <SearchText>Search SOLIDWORKS Help</SearchText>
          <Slot w={32}><svg width="24" height="24" viewBox="0 0 24 24"><circle cx="15" cy="9" r="7.500" fill="#f6fafc" stroke="#537f9d" strokeWidth="1.600" /><path d="M10 14.500 3 22" stroke="#4e86a9" strokeWidth="3" strokeLinecap="round" /></svg></Slot>
          <Slot w={15}><Caret c="#333" /></Slot>
        </Search>
        <Slot w={34}><Icon n="user" s={22} /></Slot><Slot w={18}><HelpMark>?</HelpMark></Slot><Slot w={18}><Caret s={6} /></Slot><Slot w={25}><WinIcon k="min" /></Slot><Slot w={25}><WinIcon k="restore" /></Slot><Slot w={27}><WinIcon k="close" /></Slot>
      </TitleBar>

      <Ribbon>
        {cmds.map(([ic, t, w]) => (
          <Cmd key={t} w={w} up={ic === 'sim'}>
            {ic === 'pdf' ? <PdfIcon /> : <Icon n={ic} />}<span>{t}</span>{ic === 'sim' && <Caret s={6} />}
          </Cmd>
        ))}
      </Ribbon>

      <TabStrip>
        <Tab w={83}>Assembly</Tab><Tab w={63}>Layout</Tab><Tab w={62}>Sketch</Tab><Tab w={70}>Markup</Tab><Tab w={74}>Evaluate</Tab><Tab w={182} on>SOLIDWORKS Add-Ins</Tab><Tab w={56}>MBD</Tab><Tab w={157} sp={0.45}>SOLIDWORKS CAM</Tab>
        <HeadsUp>
          {huds.map(([n, w], i) => <Slot key={i} w={w}>{n === '^' ? <Caret c="#8b8e98" s={6} /> : <Icon n={n} />}</Slot>)}
          <Grow />
          {(['left', 'right', 'min', 'restore', 'close'] as const).map(k => <Slot key={k} w={26}><WinIcon k={k} c="#777" h="#dfe1e8" /></Slot>)}
          <Gap w={4} />
        </HeadsUp>
      </TabStrip>

      <Middle>
        <Side>
          <Header><Dot /></Header>
          <SideTabs>
            <SideTab on><Icon n="asm" s={21} /></SideTab><SideTab><Icon n="prop" s={19} /></SideTab><SideTab><Icon n="config" s={19} /></SideTab><SideTab><Icon n="target" s={20} /></SideTab><SideTab><Icon n="appear" s={19} /></SideTab>
            <SideTab w={28}><Gap w={9} /><Icon n="cam" s={19} /></SideTab>
            <Scroller w={23}><svg width="5" height="8" viewBox="0 0 5 8"><path d="M5 0v8L0 4z" /></svg></Scroller><Scroller w={23}><svg width="5" height="8" viewBox="0 0 5 8"><path d="M0 0v8l5-4z" /></svg></Scroller>
          </SideTabs>
          <Filter><Icon n="filter" s={18} /><Caret s={6} /></Filter>
          <Tree>
            <Row><Gap w={2} /><Icon n="asm" s={20} /><Gap w={3} /><Icon n="hat" s={20} /><Label sp={0.25}>Assem1  (Default{'<'}Display State-1</Label></Row>
            {nodes.map(([k, t, open, sp], i) => (
              <Row key={i}><Twisty>{open && <svg width="5" height="8" viewBox="0 0 5 8"><path d="M0 0v8l5-4z" fill="#f4f4f4" /></svg>}</Twisty><NodeIcon k={k} /><Label sp={sp}>{t}</Label></Row>
            ))}
            <Rollback />
          </Tree>
          <HScroll><svg width="7" height="11" viewBox="0 0 7 11"><path d="M6 1 1.500 5.500 6 10" fill="none" stroke="#555" strokeWidth="2" /></svg><Thumb /><i /><svg width="7" height="11" viewBox="0 0 7 11"><path d="M1 1l4.500 4.500L1 10" fill="none" stroke="#555" strokeWidth="2" /></svg></HScroll>
        </Side>
        <Splitter><Handle><Dot /></Handle></Splitter>
        <Viewport>
          <Model />
          <TaskPane>{['homeDark', 'library', 'folder2', 'palette', 'appear', 'prop', 'forum'].map((n, i) => <PaneBtn key={n} on={i === 0}><Icon n={n} s={18} /></PaneBtn>)}</TaskPane>
        </Viewport>
      </Middle>

      <Views>
        <Controls>
          <Btn>Capture 3D View</Btn><SortLabel>Sort order:</SortLabel>
          <Drop>History<svg width="11" height="6" viewBox="0 0 11 6"><path d="M.5.500l5 5 5-5" fill="none" stroke="#444" /></svg></Drop>
          <Btn>Update Previews</Btn>
        </Controls>
        <View ml={37} w={100}><RobotThumb angle={52} /><span>3D View-1</span></View>
        <View ml={34} w={100} up><RobotThumb angle={5} tall /><span>3D View-2</span></View>
        <Grow />
        <PanelToggle><svg width="22" height="12" viewBox="0 0 22 12"><path d="M3 1.500l5 4 5-4M3 5.500l5 4 5-4" fill="none" stroke="#aaa" /></svg></PanelToggle>
      </Views>

      <BottomTabs>
        {['M6 1v8M13 1v8L8 5z', 'M12 1v8L6 5z', 'M8 1v8l6-4z', 'M14 1v8M7 1v8l5-4z'].map(d => <NavBtn key={d}><svg width="18" height="10" viewBox="0 0 20 10"><path d={d} fill="#77778c" stroke="#77778c" /></svg></NavBtn>)}
        <BTab w={77} pl={20}>Model</BTab><BTab w={89} pl={7} on>3D Views</BTab><BTab w={144} pl={13}>Motion Study 1</BTab>
      </BottomTabs>

      <Status>
        <Cell w={1444} sp={0.37}>SOLIDWORKS Premium 2020 SP0.0</Cell><Cell w={115} sp={0.38}>Under Defined</Cell><Cell w={142} sp={0.5}>Editing Assembly</Cell>
        <Cell w={97}><svg width="18" height="18" viewBox="0 0 18 18"><path d="M1 11h14v6H1z" fill="#5b93b5" stroke="#222" /><path d="M3 17v-4M6 17v-2M9 17v-4M12 17v-2" stroke="#111" /><path d="M7 1 13 12H1z" fill="#ffd426" stroke="#6b2500" /><path d="M7 5v3M7 9.500v1" stroke="#000" strokeWidth="1.400" /><path d="M12 11c4-2 3-5 2-7l3 1-3-4-3 4" fill="none" stroke="#111" strokeWidth="2" /></svg></Cell>
        <Cell w={69} sp={0.6}>MMGS</Cell><Cell w={32}><svg width="6" height="4" viewBox="0 0 7 4"><path d="M0 4h7L3.500 0z" fill="#eee" /></svg></Cell>
        <svg width="16" height="14" viewBox="0 0 16 14"><path d="M1 3l4-2 3 3 4-3 3 5-6 7-7-5z" fill="#e5e5e5" stroke="#222" /><path d="M3 5l6 5M6 4l5 5M10 4l3 3" stroke="#555" /></svg>
      </Status>

      <Taskbar>
        {taskIcons.map((t, i) => <TaskItem key={i} w={t.w} run={t.run} on={t.on}>{t.i}</TaskItem>)}
        <Grow />
        <Slot w={28}><svg width="28" height="28" viewBox="0 0 28 28"><circle cx="14" cy="14" r="12" fill="#1489cd" stroke="#fff" strokeWidth="3" /><text x="14" y="21" textAnchor="middle" fontFamily="Open Sans" fontWeight="700" fontSize="19" fill="#fff">?</text></svg></Slot>
        <Gap w={115} />
        <Slot w={24}><svg width="24" height="24" viewBox="0 0 24 24"><defs><linearGradient id="moon" x1="0" x2="1" y2=".6"><stop stopColor="#f59b1c" /><stop offset="1" stopColor="#ffe83e" /></linearGradient></defs><path d="M14 1c8 4 11 12 6 18-5 6-14 5-19-2 10 3 16-5 13-16z" fill="url(#moon)" /></svg></Slot>
        <Gap w={13} /><Weather>22°C  Clear</Weather>
        <Slot w={15}><svg width="15" height="9" viewBox="0 0 15 9"><path d="M1 8l6.500-6.500L14 8" fill="none" stroke="#fff" strokeWidth="1.400" /></svg></Slot>
        <Slot w={65}><svg width="20" height="18" viewBox="0 0 20 18"><path d="M6 5h12v10H5V9M18 8h1.500v4H18" fill="none" stroke="#fff" strokeWidth="1.400" /><path d="M8 7h7v6H8z" fill="#fff" /><path d="M1.500 1v3M4.500 1v3M0 4h6v3H4v2H2V7H0z" fill="#fff" stroke="#fff" strokeWidth=".800" /></svg></Slot>
        <Slot w={15}><svg width="20" height="18" viewBox="0 0 20 18"><path d="M1 6h3l4-4v14l-4-4H1z" fill="none" stroke="#fff" strokeWidth="1.300" /><path d="M11 6c1.500 2 1.500 4 0 6" stroke="#fff" fill="none" strokeWidth="1.300" /><path d="M14 4c3 3 3 7 0 10M17 2c4 4 4 10 0 14" stroke="#7c8c99" fill="none" strokeWidth="1.300" /></svg></Slot>
        <Slot w={65}><svg width="18" height="18" viewBox="0 0 18 18"><path d="M2 16C2 8 8 3 16 3M5 16c0-6 5-10 11-10M8.500 16c0-4 4-7 7.500-7" fill="none" stroke="#ddd" strokeWidth="1.200" transform="rotate(4 9 9)" /><circle cx="14" cy="15" r="1.700" fill="#fff" /></svg></Slot>
        <Slot w={25}><svg width="20" height="22" viewBox="0 0 22 22"><path d="M8 16 16 3c2-3 5-1 4 2l-7 11-4 3zM8 11c-6-2-9 6-5 8 4 1 8-5 10-4l1 3M16 13l4-3" fill="none" stroke="#fff" strokeWidth="1.400" /></svg></Slot>
        <Gap w={21} /><Lang>ENG</Lang><Gap w={1} /><Clock>12:07 AM<br />5/19/2021</Clock>
        <Gap w={20} />
        <svg width="33" height="32" viewBox="0 0 33 32"><path d="M1 1h20v16H9l-4 4v-4H1z" fill="#fff" /><path d="M4 5h14M4 9h14M4 13h9" stroke="#14293c" strokeWidth="1.500" /><circle cx="20" cy="21" r="9" fill="#17588e" stroke="#7996ac" /><text x="20" y="26" textAnchor="middle" fontFamily="Open Sans" fontSize="13" fill="#fff" fontWeight="600">1</text></svg>
        <Gap w={19} />
      </Taskbar>
    </Page>
  );
}
